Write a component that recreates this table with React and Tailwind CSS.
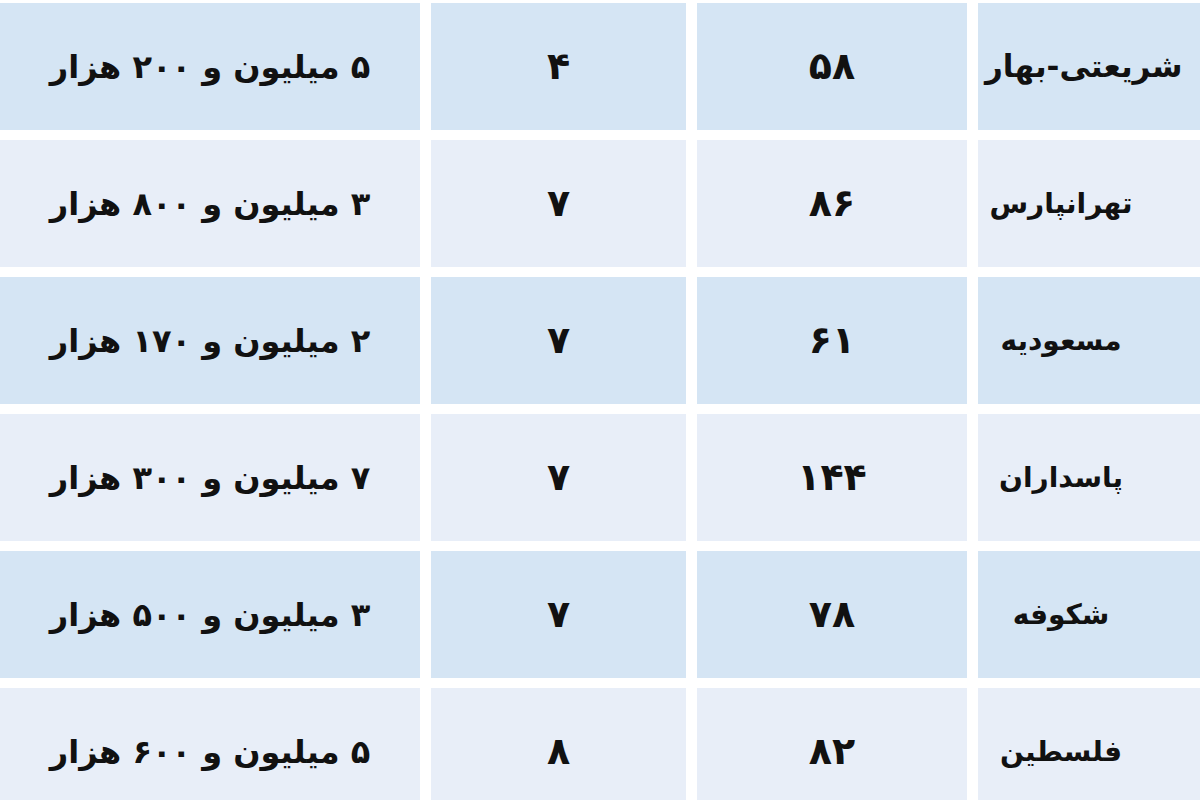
import React from "react";

const rows = [
  ["شریعتی-بهار", "۵۸", "۴", "۵ میلیون و ۲۰۰ هزار"],
  ["تهرانپارس", "۸۶", "۷", "۳ میلیون و ۸۰۰ هزار"],
  ["مسعودیه", "۶۱", "۷", "۲ میلیون و ۱۷۰ هزار"],
  ["پاسداران", "۱۴۴", "۷", "۷ میلیون و ۳۰۰ هزار"],
  ["شکوفه", "۷۸", "۷", "۳ میلیون و ۵۰۰ هزار"],
  ["فلسطین", "۸۲", "۸", "۵ میلیون و ۶۰۰ هزار"],
];

export default function App() {
  return (
    <div
      className="w-[1200px] h-[800px] overflow-hidden bg-white pt-[3px]"
      style={{ fontFamily: '"DejaVu Sans", sans-serif' }}
    >
      <div className="grid grid-cols-[420px_255px_270px_222px] auto-rows-[127px] gap-x-[11px] gap-y-[10px]">
        {rows.map((r, i) => {
          const bg = i % 2 === 0 ? "bg-[#d5e5f4]" : "bg-[#e8eef8]";
          return (
            <React.Fragment key={i}>
              <div className={`${bg} flex items-center justify-center`}>
                <span dir="rtl" className="text-[32px] font-bold text-[#111] whitespace-nowrap">{r[3]}</span>
              </div>
              <div className={`${bg} flex items-center justify-center`}>
                <span dir="rtl" className="text-[38px] font-bold text-[#111]">{r[2]}</span>
              </div>
              <div className={`${bg} flex items-center justify-center`}>
                <span dir="rtl" className="text-[38px] font-bold text-[#111]">{r[1]}</span>
              </div>
              <div className={`${bg} flex items-center overflow-hidden ${i === 0 ? "justify-start pl-[7px]" : "justify-center pr-[56px]"}`}>
                <span dir="rtl" className={`${i === 0 ? "text-[31px]" : "text-[28px]"} font-bold text-[#111] whitespace-nowrap`}>{r[0]}</span>
              </div>
            </React.Fragment>
          );
        })}
      </div>
    </div>
  );
}
